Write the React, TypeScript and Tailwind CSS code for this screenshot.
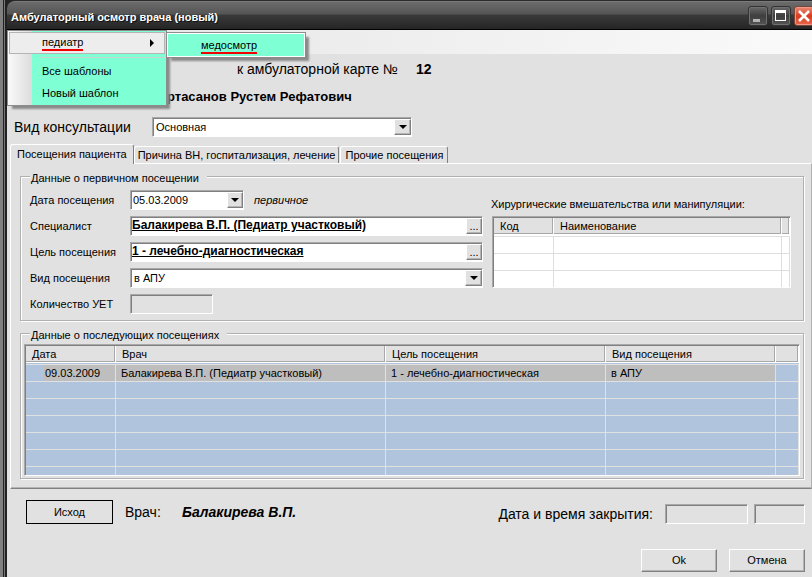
import React from 'react';

const sunken =
  'border border-t-[#a8a8a8] border-l-[#a8a8a8] border-r-white border-b-white shadow-[inset_1px_1px_0_#808080]';
const raised =
  'bg-[#e1e1e1] border border-t-white border-l-white border-r-[#808080] border-b-[#808080] shadow-[inset_-1px_-1px_0_#b4b4b4]';
const etched =
  'min-w-0 border border-[#b0b0b0] shadow-[inset_1px_1px_0_#fff,1px_1px_0_#fff]';

function Arrow() {
  return (
    <svg width="8" height="4" viewBox="0 0 8 4" aria-hidden="true">
      <path d="M0 0h8L4 4z" fill="#000" />
    </svg>
  );
}

function Combo({ id, value, options, className }: { id: string; value: string; options: string[]; className: string }) {
  return (
    <div className={`relative flex h-5 bg-white ${sunken} ${className}`}>
      <select id={id} defaultValue={value} className="w-full appearance-none bg-transparent pl-[3px] pr-5 leading-[18px] outline-none">
        {options.map((o) => (
          <option key={o}>{o}</option>
        ))}
      </select>
      <span className={`pointer-events-none absolute inset-y-px right-0 flex w-[17px] items-center justify-center ${raised}`}>
        <Arrow />
      </span>
    </div>
  );
}

function Lookup({ id, value }: { id: string; value: string }) {
  return (
    <div className={`flex h-5 w-full bg-white pl-px ${sunken}`}>
      <input id={id} defaultValue={value} className="min-w-0 flex-1 bg-transparent pb-0.5 text-[12px] font-bold underline outline-none" />
      <button type="button" aria-label="Выбрать" className={`my-px w-4 leading-3 ${raised}`}>
        ...
      </button>
    </div>
  );
}

function Th({ children }: { children?: React.ReactNode }) {
  return (
    <th className="h-[17px] truncate border-r border-b border-white bg-[#e1e1e1] pl-1.5 text-left leading-4 font-normal shadow-[inset_-1px_-1px_0_#a8a8a8]">
      {children}
    </th>
  );
}

function TitleBar() {
  const box = 'flex size-5 items-center justify-center rounded-[3px] border';
  const dark = 'border-[#333] bg-linear-to-b from-[#6a6a6a] via-[#3e3e3e] to-[#555] shadow-[inset_0_0_0_1px_#707070]';
  return (
    <div className="bg-[#222]">
      <header className="flex h-[30px] items-center justify-between rounded-tl-lg border-t border-b border-t-[#2a2a2a] border-b-black bg-[linear-gradient(#8a8a8a_0,#6b6b6b_1px,#555_13px,#3a3a3a_14px,#252525)] pl-1 text-white">
        <h1 className="pt-1 text-[11px] font-bold [text-shadow:1px_1px_0_#111]">Амбулаторный осмотр врача (новый)</h1>
        <div className="-mr-0.5 flex shrink-0 gap-[3px] pt-0.5">
          <button type="button" aria-label="Свернуть" className={`${box} ${dark}`}>
            <svg width="14" height="14" viewBox="0 0 14 14">
              <path d="M2 10h7v3H2z" fill="#b4b4b4" />
            </svg>
          </button>
          <button type="button" aria-label="Развернуть" className={`${box} ${dark}`}>
            <svg width="12" height="12" viewBox="0 0 12 12">
              <path d="M0 0h11v11H0zM1 3v7h9V3z" fill="#fff" fillRule="evenodd" />
            </svg>
          </button>
          <button
            type="button"
            aria-label="Закрыть"
            className={`${box} border-[#7a4438] bg-linear-to-b from-[#ea8a74] via-[#d9391a] to-[#e8674a] shadow-[inset_0_0_0_1px_#ee9a88]`}
          >
            <svg width="12" height="12" viewBox="0 0 12 12">
              <path d="M1 1l10 10M11 1L1 11" stroke="#fff" strokeWidth="2.6" />
            </svg>
          </button>
        </div>
      </header>
    </div>
  );
}

function TemplateMenu() {
  const item = 'block h-[22px] w-full pl-[34px] text-left';
  return (
    <nav aria-label="Шаблоны">
      <ul className="absolute top-0 left-0 z-10 h-[76px] w-[160px] border border-[#8c8c8c] bg-[linear-gradient(90deg,#fafafa,#dcdcdc_24px,#7fffd4_24px)] shadow-[4px_4px_2px_-1px_#8a8a8a]">
        <li className="m-px mb-0 flex h-[22px] items-center border border-[#b4b4b4] bg-[#eeeded] pl-8">
          <button type="button" className="flex w-full items-center justify-between pr-2.5">
            <span className="border-b-2 border-[#f00000] leading-[13px]">педиатр</span>
            <svg width="4" height="8" viewBox="0 0 4 8" aria-hidden="true">
              <path d="M0 0v8l4-4z" />
            </svg>
          </button>
        </li>
        <li className="mt-[3px] mr-px mb-0.5 ml-8 h-px bg-[#c8d4d0]" />
        <li>
          <button type="button" className={item}>Все шаблоны</button>
        </li>
        <li>
          <button type="button" className={item}>Новый шаблон</button>
        </li>
      </ul>
      <div className="absolute top-0.5 left-[159px] z-20 w-[140px] border border-[#8c8c8c] bg-white p-px shadow-[4px_4px_2px_-1px_#8a8a8a]">
        <button type="button" className="flex h-[22px] w-full items-center bg-[#7fffd4] pt-0.5 pl-[33px]">
          <span className="border-b-2 border-[#f00000] leading-[13px]">медосмотр</span>
        </button>
      </div>
    </nav>
  );
}

function FirstVisit() {
  return (
    <fieldset className={`${etched} mt-0.5 pr-3 pb-1.5 pl-[9px]`}>
      <legend className="h-5 bg-[#e1e1e1] pt-1 pr-2 pl-px leading-4">Данные о первичном посещении</legend>
      <div className="flex gap-2 pt-1">
        <div className="grid w-[453px] shrink-0 auto-rows-[20px] grid-cols-[100px_1fr] items-center gap-y-1.5">
          <label htmlFor="date">Дата посещения</label>
          <div className="flex items-center gap-2.5">
            <div className={`flex h-5 w-[114px] bg-white pl-0.5 ${sunken}`}>
              <input id="date" defaultValue="05.03.2009" className="min-w-0 flex-1 bg-transparent outline-none" />
              <button type="button" aria-label="Календарь" className={`my-px flex w-4 items-center justify-center ${raised}`}>
                <Arrow />
              </button>
            </div>
            <em>первичное</em>
          </div>
          <label htmlFor="doctor">Специалист</label>
          <Lookup id="doctor" value="Балакирева В.П. (Педиатр участковый)" />
          <label htmlFor="purpose">Цель посещения</label>
          <Lookup id="purpose" value="1 - лечебно-диагностическая" />
          <label htmlFor="kind">Вид посещения</label>
          <Combo id="kind" value="в АПУ" options={['в АПУ', 'на дому']} className="w-full" />
          <label htmlFor="count">Количество УЕТ</label>
          <input id="count" disabled className={`h-5 w-[83px] bg-[#e1e1e1] ${sunken}`} />
        </div>
        <div className="min-w-0 flex-1 pt-1.5">
          <h2 className="truncate leading-4">Хирургические вмешательства или манипуляции:</h2>
          <div className={`mt-1 ml-px h-[72px] overflow-hidden bg-white pt-px pl-px ${sunken}`}>
            <table className="w-full table-fixed border-separate border-spacing-0">
              <colgroup>
                <col className="w-[60px]" />
                <col />
                <col className="w-2" />
              </colgroup>
              <thead>
                <tr>
                  <Th>Код</Th>
                  <Th>Наименование</Th>
                  <Th />
                </tr>
              </thead>
              <tbody>
                <tr aria-hidden="true">
                  <td colSpan={3} className="h-0.5 border-b border-[#dedede] p-0" />
                </tr>
                {[0, 1, 2].map((r) => (
                  <tr key={r}>
                    {[0, 1, 2].map((c) => (
                      <td key={c} className="h-[17px] border-r border-b border-[#dedede] p-0" />
                    ))}
                  </tr>
                ))}
              </tbody>
            </table>
          </div>
        </div>
      </div>
    </fieldset>
  );
}

function NextVisits() {
  const cell = 'h-[17px] truncate border-r border-b border-[#e1e1e1] p-0 leading-4';
  return (
    <fieldset className={`${etched} mt-0.5 px-[3px] pb-0.5`}>
      <legend className="ml-1.5 h-5 bg-[#e1e1e1] pt-1 pr-2 pl-px leading-4">Данные о последующих посещениях</legend>
      <div className={`mt-px h-[132px] overflow-hidden bg-[#b0c4de] pt-px pl-px ${sunken}`}>
        <table className="w-full table-fixed border-separate border-spacing-0">
          <colgroup>
            <col className="w-[90px]" />
            <col className="w-[270px]" />
            <col className="w-[220px]" />
            <col className="w-[170px]" />
            <col />
          </colgroup>
          <thead>
            <tr>
              <Th>Дата</Th>
              <Th>Врач</Th>
              <Th>Цель посещения</Th>
              <Th>Вид посещения</Th>
              <Th />
            </tr>
          </thead>
          <tbody>
            <tr aria-hidden="true">
              <td colSpan={5} className="h-0.5 border-b border-[#e1e1e1] p-0" />
            </tr>
            <tr>
              <td className={`${cell} pl-[18px]`}>
                <div className="bg-[#bebebe] pl-px">09.03.2009</div>
              </td>
              <td className={`${cell} bg-[#bebebe] pl-[5px]`}>Балакирева В.П. (Педиатр участковый)</td>
              <td className={`${cell} bg-[#bebebe] pl-[5px]`}>1 - лечебно-диагностическая</td>
              <td className={`${cell} bg-[#bebebe] pl-[5px]`}>в АПУ</td>
              <td className={cell} />
            </tr>
            {[0, 1, 2, 3, 4, 5].map((r) => (
              <tr key={r}>
                {[0, 1, 2, 3, 4].map((c) => (
                  <td key={c} className={cell} />
                ))}
              </tr>
            ))}
          </tbody>
        </table>
      </div>
    </fieldset>
  );
}

export default function App() {
  const tab = 'rounded-t-[3px] border border-b-0 border-t-white border-l-white border-r-[#808080] bg-[#e1e1e1] whitespace-nowrap';
  return (
    <div className="min-h-screen overflow-hidden bg-[linear-gradient(90deg,#808080_3px,#222_3px,#222_4px,#777_4px,#777_5px,#222_5px,#222_7px,#e1e1e1_7px)] pl-[7px] font-['Liberation_Sans',Arial,sans-serif] text-[11px] text-black">
      <TitleBar />
      <div className="relative h-6 bg-linear-to-r from-[#e4e4e4] to-[#fafafa]">
        <TemplateMenu />
      </div>
      <main>
        <p className="flex h-[30px] items-center gap-[18px] pl-[230px] text-[14px]">
          <span>к амбулаторной карте №</span>
          <b>12</b>
        </p>
        <p className="flex h-[26px] items-center pl-[160px] text-[13px] font-bold">ртасанов Рустем Рефатович</p>
        <div className="mt-[7px] flex items-center pl-[7px]">
          <label htmlFor="consult" className="w-[138px] text-[14px] leading-5">Вид консультации</label>
          <Combo id="consult" value="Основная" options={['Основная', 'Повторная']} className="w-[260px]" />
        </div>

        <div role="tablist" className="mt-[7px] ml-[3px] flex items-end">
          <button role="tab" aria-selected="true" type="button" className={`relative -mb-px h-5 px-1.5 ${tab}`}>
            Посещения пациента
          </button>
          <button role="tab" aria-selected="false" type="button" className={`h-[17px] px-[3px] ${tab}`}>
            Причина ВН, госпитализация, лечение
          </button>
          <button role="tab" aria-selected="false" type="button" className={`ml-px h-[17px] px-1 ${tab}`}>
            Прочие посещения
          </button>
        </div>
        <section
          role="tabpanel"
          className="ml-[3px] border border-t-white border-l-white border-r-[#b0b0b0] border-b-[#808080] pr-[7px] pb-[9px] pl-[9px] shadow-[inset_0_-1px_0_#b4b4b4]"
        >
          <FirstVisit />
          <NextVisits />
        </section>

        <footer className="pt-[11px] pr-[7px] pl-[19px]">
          <div className="flex items-center">
            <button type="button" className="h-6 w-[87px] border border-black">Исход</button>
            <span className="ml-3 w-[57px] text-[14px]">Врач:</span>
            <em className="text-[14px] font-bold">Балакирева В.П.</em>
            <label htmlFor="closeDate" className="ml-auto pt-1 text-[14px] leading-5">Дата и время закрытия:</label>
            <input id="closeDate" disabled className={`mt-1 ml-3 h-5 w-[83px] bg-[#e1e1e1] ${sunken}`} />
            <input aria-label="Время закрытия" disabled className={`mt-1 ml-1.5 h-5 w-[51px] bg-[#e1e1e1] ${sunken}`} />
          </div>
          <div className="mt-[25px] flex justify-end gap-3">
            <button type="button" className={`h-[23px] w-[76px] ${raised}`}>Ok</button>
            <button type="button" className={`h-[23px] w-[76px] ${raised}`}>Отмена</button>
          </div>
        </footer>
      </main>
    </div>
  );
}
